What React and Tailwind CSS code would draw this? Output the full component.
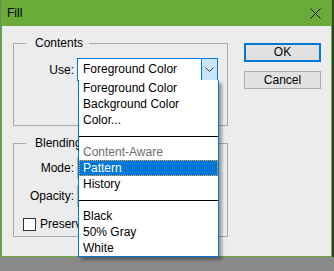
import React from "react";

const listItems = [
  { label: "Foreground Color" },
  { label: "Background Color" },
  { label: "Color..." },
  { sep: true },
  { label: "Content-Aware", disabled: true },
  { label: "Pattern", selected: true },
  { label: "History" },
  { sep: true },
  { label: "Black" },
  { label: "50% Gray" },
  { label: "White" },
];

const Chevron = () => (
  <svg width="9" height="5" viewBox="0 0 9 5" fill="none">
    <path d="M0.5 0.5 L4.5 4.5 L8.5 0.5" stroke="#404040" strokeWidth="1" />
  </svg>
);

const CloseIcon = () => (
  <svg width="11" height="11" viewBox="0 0 11 11" fill="none">
    <path d="M0.5 0.5 L10.5 10.5 M10.5 0.5 L0.5 10.5" stroke="#111" strokeWidth="1" />
  </svg>
);

const DropList = () => (
  <div className="absolute left-0 top-full z-10 w-[141px] bg-white border border-t-0 border-[#0078d7] shadow-[3px_3px_3px_rgba(0,0,0,0.35)]">
    {listItems.map((item, i) =>
      item.sep ? (
        <div key={i} className="h-[16px] flex items-center">
          <div className="h-[1px] w-full bg-black" />
        </div>
      ) : (
        <div
          key={i}
          className={
            "h-[16px] leading-[14px] pl-[3px] border " +
            (item.selected
              ? "bg-[#0078d7] text-white border-dotted border-[#f0a347]"
              : item.disabled
              ? "text-[#6d6d6d] border-transparent"
              : "text-black border-transparent")
          }
        >
          {item.label}
        </div>
      )
    )}
  </div>
);

const GroupBox = ({ title, className, children }) => (
  <fieldset className={"w-[215px] border border-[#a9a9a9] " + className}>
    <legend className="ml-[12px] pl-[9px] pr-[6px] leading-[16px]">{title}</legend>
    {children}
  </fieldset>
);

const FillDialog = () => (
  <div className="w-[331px] h-[257px] flex flex-col bg-[#6bab3a] px-[1px] pb-[1px]">
    <div className="h-[26px] flex items-center justify-between pl-[5px] pr-[10px]">
      <span className="text-black">Fill</span>
      <CloseIcon />
    </div>
    <div className="flex-1 bg-[#ececec] flex pl-[11px] pt-[9px]">
      <div className="flex flex-col">
        <GroupBox title="Contents" className="h-[91px]">
          <div className="flex items-center mt-[7px]">
            <span className="w-[60px] text-right">Use:</span>
            <div className="relative ml-[3px] w-[141px] h-[23px] bg-white border border-[#0078d7] flex">
              <span className="flex-1 pl-[5px] leading-[21px]">Foreground Color</span>
              <div className="w-[16px] border-l border-[#0078d7] bg-[#cce4f7] flex items-center justify-center">
                <Chevron />
              </div>
              <DropList />
            </div>
          </div>
        </GroupBox>
        <GroupBox title="Blending" className="h-[102px] mt-[9px]">
          {/* mode and opacity fields sit under the open list */}
          <div className="flex items-center mt-[6px] h-[22px]">
            <span className="w-[60px] text-right">Mode:</span>
            <div className="ml-[3px] w-[130px] h-[22px] bg-white border border-[#adadad]" />
          </div>
          <div className="flex items-center mt-[6px] h-[22px]">
            <span className="w-[60px] text-right">Opacity:</span>
            <div className="ml-[3px] w-[50px] h-[22px] bg-white border border-[#adadad]" />
          </div>
          <div className="flex items-center mt-[8px] ml-[9px]">
            <div className="w-[13px] h-[13px] bg-white border border-[#333]" />
            <span className="ml-[4px]">Preserve Transparency</span>
          </div>
        </GroupBox>
      </div>
      <div className="ml-[16px] flex flex-col">
        <button className="mt-[8px] w-[77px] h-[19px] bg-[#e1e1e1] border-2 border-[#0078d7] leading-[15px] text-center">
          OK
        </button>
        <button className="mt-[9px] w-[77px] h-[18px] bg-[#e1e1e1] border border-[#adadad] leading-[16px] text-center">
          Cancel
        </button>
      </div>
    </div>
  </div>
);

export default function App() {
  return (
    <div className="w-[334px] h-[271px] overflow-hidden bg-[#8a8a8a] font-['Liberation_Sans',sans-serif] text-[12px] text-black">
      <div className="flex h-[257px]">
        <div className="w-[1px] bg-[#6f8a5c]" />
        <FillDialog />
        <div className="flex-1 bg-[#2f4526]" />
      </div>
    </div>
  );
}
